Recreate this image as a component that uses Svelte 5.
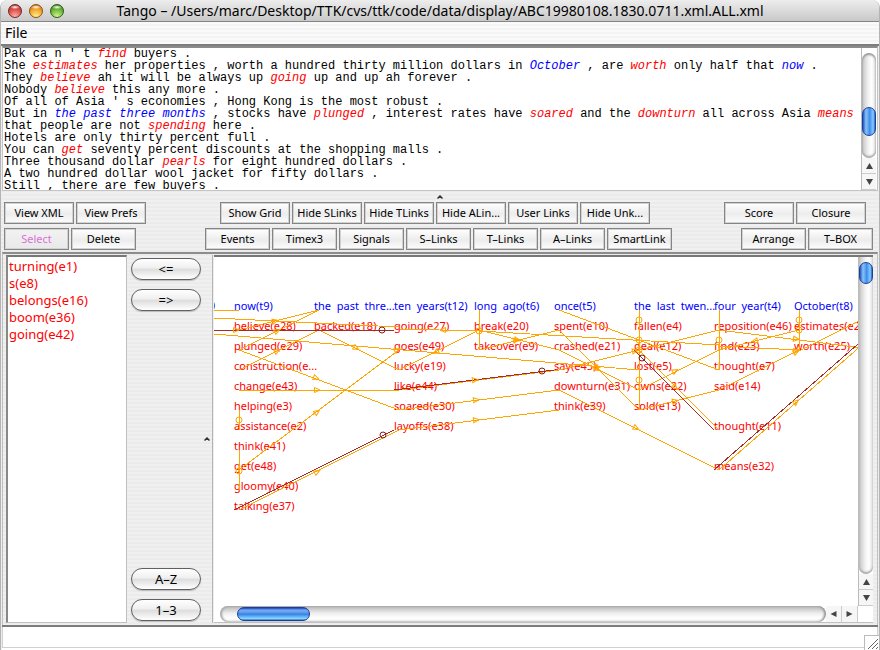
<script>
  const path = 'Tango – /Users/marc/Desktop/TTK/cvs/ttk/code/data/display/ABC19980108.1830.0711.xml.ALL.xml';

  // *word* marks an event, _word_ marks a time expression
  const source = [
    "Pak ca n ' t *find* buyers .",
    'She *estimates* her properties , worth a hundred thirty million dollars in _October_ , are *worth* only half that _now_ .',
    'They *believe* ah it will be always up *going* up and up ah forever .',
    'Nobody *believe* this any more .',
    "Of all of Asia ' s economies , Hong Kong is the most robust .",
    'But in _the past three months_ , stocks have *plunged* , interest rates have *soared* and the *downturn* all across Asia *means*',
    'that people are not *spending* here .',
    'Hotels are only thirty percent full .',
    'You can *get* seventy percent discounts at the shopping malls .',
    'Three thousand dollar *pearls* for eight hundred dollars .',
    'A two hundred dollar wool jacket for fifty dollars .',
    'Still , there are few buyers .'
  ];
  const lines = source.map((line) =>
    line.split(/(\*[^*]+\*|_[^_]+_)/).filter(Boolean).map((t) =>
      t[0] === '*' ? { kind: 'event', text: t.slice(1, -1) }
      : t[0] === '_' ? { kind: 'time', text: t.slice(1, -1) }
      : { kind: '', text: t }));

  const rows = [
    { wide: true, groups: [
      ['View XML', 'View Prefs'],
      ['Show Grid', 'Hide SLinks', 'Hide TLinks', 'Hide ALin...', 'User Links', 'Hide Unk...'],
      ['Score', 'Closure']] },
    { wide: false, groups: [
      ['Select', 'Delete'],
      ['Events', 'Timex3', 'Signals', 'S–Links', 'T–Links', 'A–Links', 'SmartLink'],
      ['Arrange', 'T–BOX']] }
  ];

  const events = ['turning(e1)', 's(e8)', 'belongs(e16)', 'boom(e36)', 'going(e42)'];

  // each column: time label first, then events on rows 1, 2, 3 ...
  const columns = [
    ['now(t9)', 'believe(e28)', 'plunged(e29)', 'construction(e...', 'change(e43)', 'helping(e3)', 'assistance(e2)', 'think(e41)', 'get(e48)', 'gloomy(e40)', 'talking(e37)'],
    ['the  past  thre...', 'backed(e18)'],
    ['ten  years(t12)', 'going(e27)', 'goes(e49)', 'lucky(e19)', 'like(e44)', 'soared(e30)', 'layoffs(e38)'],
    ['long  ago(t6)', 'break(e20)', 'takeover(e9)'],
    ['once(t5)', 'spent(e10)', 'crashed(e21)', 'say(e45)', 'downturn(e31)', 'think(e39)'],
    ['the  last  twen...', 'fallen(e4)', 'deal(e12)', 'lost(e5)', 'owns(e22)', 'sold(e13)'],
    ['four  year(t4)', 'reposition(e46)', 'find(e23)', 'thought(e7)', 'said(e14)', '', 'thought(e11)', '', 'means(e32)'],
    ['October(t8)', 'estimates(e24)', 'worth(e25)']
  ];
  const nodes = columns.flatMap((col, c) =>
    col.map((text, r) => ({ text, time: r === 0, x: 20 + 80 * c, y: 53 + 20 * r })).filter((n) => n.text));

  // x1, y1, x2, y2 on the canvas
  const links = [
    [0, 53, 25, 53], [0, 61, 185, 70], [0, 77, 425, 113],
    [25, 73, 105, 53], [25, 93, 105, 53], [25, 113, 105, 73], [25, 93, 185, 153],
    [105, 73, 185, 113], [25, 133, 185, 133], [25, 213, 185, 93], [25, 253, 185, 173],
    [25, 153, 25, 173], [25, 193, 25, 233],
    [185, 72, 265, 74], [185, 113, 265, 73], [185, 133, 345, 113], [185, 153, 345, 133], [185, 173, 345, 153],
    [265, 53, 265, 93], [265, 93, 345, 73], [265, 73, 345, 93], [265, 74, 505, 88],
    [345, 53, 505, 113], [345, 93, 425, 133], [345, 73, 425, 153], [345, 113, 425, 93], [345, 133, 505, 213],
    [425, 53, 425, 153], [425, 93, 505, 73], [425, 133, 505, 93], [425, 153, 505, 133], [425, 93, 505, 173],
    [505, 53, 505, 113], [505, 73, 665, 93], [505, 93, 585, 73], [505, 89, 585, 93],
    [585, 53, 585, 93], [505, 133, 585, 93], [585, 94, 665, 54], [505, 213, 665, 73]
  ];
  const darkLinks = [
    [0, 73, 180, 73, 168, 73], [20, 253, 180, 173, 169, 178], [180, 133, 340, 113, 328, 114],
    [420, 93, 500, 173, 428, 101], [500, 213, 660, 73, 0, 0]
  ];
  // x, y, rotation in degrees
  const arrows = [
    [22, 73, 0], [61, 64, -14], [63, 74, -27], [63, 94, -27], [102, 121, 21], [142, 91, 27], [103, 133, 0],
    [103, 155, -37], [103, 215, -27], [229, 73, 180], [222, 95, 153], [183, 93, -30], [261, 123, -7], [262, 143, -7], [262, 163, -7],
    [302, 83, -14], [303, 83, 14], [383, 110, 5], [383, 112, 27], [383, 111, 45], [422, 171, 27],
    [421, 94, -10], [461, 114, -27], [461, 144, -14], [461, 130, 45], [541, 84, 166], [582, 82, 7], [582, 94, 0], [582, 95, -27], [582, 145, -41]
  ];
  const circles = [
    [25, 163], [25, 214], [265, 74], [425, 63], [425, 83], [425, 93], [425, 123],
    [505, 83], [585, 63], [585, 73]
  ];

  let selected = $state('Select');
</script>

{#snippet arrow(dir)}
  <svg width="7" height="6" viewBox="0 0 7 6" aria-hidden="true">
    <path fill="#444" d={{ up: 'M0 6L3.5 0L7 6Z', down: 'M0 0L3.5 6L7 0Z', left: 'M6.5 0L0.5 3L6.5 6Z', right: 'M0.5 0L6.5 3L0.5 6Z' }[dir]} />
  </svg>
{/snippet}

{#snippet caret()}
  <svg width="6" height="4" viewBox="0 0 6 4" aria-hidden="true"><path d="M0.5 3.5L3 1L5.5 3.5" fill="none" stroke="#333" stroke-width="1.5" /></svg>
{/snippet}

<div class="window">
  <header class="title">
    <div class="lights">
      <button class="light red" aria-label="Close"></button>
      <button class="light amber" aria-label="Minimise"></button>
      <button class="light green" aria-label="Zoom"></button>
    </div>
    <h1>{path}</h1>
  </header>

  <nav class="menu"><button>File</button></nav>

  <section class="document">
    <div class="prose">
      {#each lines as line}
        <p>{#each line as t}<span class={t.kind}>{t.text}</span>{/each}</p>
      {/each}
    </div>
    <div class="bar vertical">
      <div class="cap"></div>
      <div class="track"><div class="thumb middle"></div></div>
      <button aria-label="Scroll text up">{@render arrow('up')}</button>
      <button aria-label="Scroll text down">{@render arrow('down')}</button>
    </div>
  </section>

  <div class="split-h">{@render caret()}</div>

  <section class="tools">
    {#each rows as row}
      <div class="row" class:wide={row.wide}>
        {#each row.groups as group}
          <div class="group">
            {#each group as label}
              <button class:active={selected === label} onclick={() => (selected = label)}>{label}</button>
            {/each}
          </div>
        {/each}
      </div>
    {/each}
  </section>

  <main class="work">
    <ul class="events">
      {#each events as e}<li>{e}</li>{/each}
    </ul>
    <div class="mover">
      <button>&lt;=</button>
      <button>=&gt;</button>
      <span class="spring"></span>
      <button>A–Z</button>
      <button>1–3</button>
    </div>
    <div class="split-v">{@render caret()}</div>
    <div class="graph">
      <div class="canvas">
        <svg width="100%" height="100%" aria-label="Temporal links">
          <g class="labels">
            <text class="time" x="1" y="52" text-anchor="end">)</text>
            {#each nodes as n}
              <text class:time={n.time} x={n.x} y={n.y}>{n.text}</text>
            {/each}
          </g>
          <g class="links">
            {#each links as [x1, y1, x2, y2]}<line {x1} {y1} {x2} {y2} />{/each}
          </g>
          <g class="links dark">
            {#each darkLinks as [x1, y1, x2, y2]}<line {x1} {y1} {x2} {y2} />{/each}
          </g>
          <g class="marks">
            {#each arrows as [x, y, a]}<path d="M-2.5 -2.5L3 0L-2.5 2.5Z" transform="translate({x} {y}) rotate({a})" />{/each}
            {#each circles as [cx, cy]}<circle {cx} {cy} r="3" />{/each}
          </g>
          <g class="marks dark">
            {#each darkLinks.filter((l) => l[4]) as l}<circle cx={l[4]} cy={l[5]} r="3" />{/each}
          </g>
        </svg>
      </div>
      <div class="bar vertical">
        <div class="track square"><div class="thumb top"></div></div>
        <button aria-label="Scroll graph up">{@render arrow('up')}</button>
        <button aria-label="Scroll graph down">{@render arrow('down')}</button>
      </div>
      <div class="bar horizontal">
        <div class="cap"></div>
        <div class="track"><div class="thumb"></div></div>
        <button aria-label="Scroll graph left">{@render arrow('left')}</button>
        <button aria-label="Scroll graph right">{@render arrow('right')}</button>
      </div>
    </div>
  </main>

  <footer class="status">
    <input aria-label="Status" readonly />
    <svg class="grip" width="15" height="15" viewBox="0 0 15 15" aria-hidden="true">
      <rect x="0.5" y="0.5" width="16" height="16" fill="#fff" stroke="#bbb" />
      <path d="M4 14L14 4M8 14L14 8M12 14L14 12" stroke="#666" fill="none" />
    </svg>
  </footer>
</div>

<style>
  :global(body) { background: #fff; }
  .window, .window * { box-sizing: border-box; }
  .window {
    display: flex;
    flex-direction: column;
    height: 100vh;
    overflow: hidden;
    border-radius: 8px 8px 0 0;
    border: 1px solid #b4b4b4;
    border-width: 0 1px;
    font-family: "Noto Sans", "Open Sans", sans-serif;
    color: #000;
    background: repeating-linear-gradient(#f0f0f0 0 2px, #ebebeb 2px 4px);
  }
  button { font: inherit; padding: 0; margin: 0; border: 0; background: none; color: inherit; }
  p, ul, h1 { margin: 0; padding: 0; }

  .title {
    display: flex;
    align-items: center;
    flex: none;
    height: 22px;
    padding: 0 63px 0 7px;
    background: linear-gradient(#ededed, #c8c8c8);
    border-bottom: 1px solid #858585;
  }
  .lights { display: flex; gap: 7px; width: 56px; }
  .light { width: 14px; height: 14px; border-radius: 50%; border: 1px solid #555; }
  .red { border-color: #6e2623; background: radial-gradient(ellipse 5px 2px at 50% 18%, #fff, transparent), radial-gradient(circle at 50% 95%, #ffb0a8, #dd504a 55%, #a02a28); }
  .amber { border-color: #8a5014; background: radial-gradient(ellipse 5px 2px at 50% 18%, #fff, transparent), radial-gradient(circle at 50% 95%, #fff48a, #f5a52e 55%, #b86a14); }
  .green { border-color: #2c5a14; background: radial-gradient(ellipse 5px 2px at 50% 18%, #fff, transparent), radial-gradient(circle at 50% 95%, #d4f888, #6cb83a 55%, #3a7a1c); }
  h1 { flex: 1; text-align: center; font-size: 14px; font-weight: 400; line-height: 20px; white-space: nowrap; }

  .menu {
    flex: none;
    height: 24px;
    padding: 0 4px;
    font-size: 14px;
    line-height: 22px;
    background: repeating-linear-gradient(#fafafa 0 2px, #f4f4f4 2px 4px);
    border-bottom: 2px solid #7e7e7e;
  }

  .document {
    display: flex;
    flex: none;
    height: 145px;
    margin: 0 1px;
    background: #fff;
    border: 1px solid #c4c4c4;
    border-top: 2px solid #8c8c8c;
    padding-right: 1px;
  }
  .prose {
    flex: 1;
    min-width: 0;
    overflow: hidden;
    padding-left: 1px;
    font-family: "Liberation Mono", "Courier New", monospace;
    font-size: 12px;
    line-height: 12px;
    white-space: pre;
  }
  .event { color: #f00; font-style: italic; }
  .prose .time { color: #00f; font-style: italic; }

  .split-h { flex: none; height: 11px; display: flex; justify-content: center; align-items: center; }

  .tools { flex: none; display: flex; flex-direction: column; gap: 4px; padding: 0 6px 2px 3px; }
  .row { display: flex; justify-content: space-between; --w: 65px; }
  .row.wide { --w: 70px; padding-right: 7px; }
  .group { display: flex; gap: 2px; }
  .group button {
    width: var(--w);
    height: 22px;
    border: 1px solid #858585;
    box-shadow: inset 1px 1px 0 #d2d2d2, inset -1px -1px 0 #d2d2d2;
    background: linear-gradient(#fff, #ececec 55%, #fdfdfd);
    font-size: 11px;
    line-height: 20px;
    white-space: nowrap;
  }
  .group .active { color: #da70d6; background: linear-gradient(#f2f2f2, #e9e9e9); }

  .work {
    flex: 1;
    min-height: 0;
    display: flex;
    margin: 0 1px;
    border: 1px solid #c0c0c0;
    border-top: 2px solid #8c8c8c;
    border-bottom: 0;
    padding: 1px 4px 2px 3px;
  }
  .events {
    width: 121px;
    list-style: none;
    background: #fff;
    border: 1px solid #c0c0c0;
    border-top: 2px solid #777;
    border-left: 2px solid #888;
    color: #f00;
    font-size: 13px;
    line-height: 17px;
    padding: 1px;
  }
  .mover { width: 74px; padding: 3px 0 2px 4px; display: flex; flex-direction: column; gap: 9px; }
  .mover button {
    width: 70px;
    height: 22px;
    border: 1px solid #606060;
    border-radius: 11px;
    background: linear-gradient(#fff, #efefef 46%, #dcdcdc 50%, #fff);
    box-shadow: 0 1px 1px #bbb;
    font-size: 13px;
    line-height: 18px;
  }
  .spring { flex: 1; }
  .split-v { width: 12px; display: flex; align-items: center; justify-content: center; border-right: 1px solid #b4b4b4; }
  .graph {
    flex: 1;
    min-width: 0;
    display: grid;
    grid-template: minmax(0, 1fr) 16px / minmax(0, 1fr) 15px;
    background: #fff;
    border-top: 2px solid #777;
    border-bottom: 1px solid #c0c0c0;
    margin-left: 1px;
  }
  .canvas { overflow: hidden; min-height: 0; }
  .canvas svg { display: block; }
  .labels { font-size: 11px; fill: #f00; }
  .labels text { white-space: pre; }
  .labels .time { fill: #00f; }
  .links { stroke: #ffa500; shape-rendering: crispEdges; }
  .links.dark { stroke: #a52a2a; }
  .marks { fill: none; stroke: #ffa500; }
  .marks.dark { stroke: #8b1a1a; }

  .bar { display: flex; background: #fff; }
  .bar button { display: flex; align-items: center; justify-content: center; flex: none; background: #f6f6f6; }
  .track { flex: 1; display: flex; }
  .vertical { width: 15px; flex-direction: column; border-left: 1px solid #bbb; }
  .vertical .cap { height: 5px; }
  .vertical .track {
    flex-direction: column;
    border-radius: 7px;
    box-shadow: inset 0 2px 2px #999, inset 0 -2px 2px #aaa;
    background: linear-gradient(90deg, #c4c4c4, #f2f2f2 45%, #fff 70%, #e0e0e0);
  }
  .vertical .square { border-radius: 0 0 7px 7px; box-shadow: inset 0 -2px 2px #aaa; }
  .vertical button { height: 16px; border-bottom: 1px solid #ccc; }
  .thumb { border: 1px solid #1c3f9c; border-radius: 7px; flex: none; }
  .vertical .thumb {
    height: 29px;
    background: linear-gradient(90deg, #1b58c8, #8cc0f4 25%, #5ea2ee 45%, #3d8ceb 55%, #86ccff 85%, #2a62c0);
  }
  .thumb.middle { margin-top: 54px; }
  .vertical .thumb.top { margin-top: 5px; height: 22px; }
  .horizontal .cap { width: 6px; }
  .horizontal .track {
    border-radius: 8px;
    box-shadow: inset 2px 0 2px #aaa, inset -2px 0 2px #999;
    background: linear-gradient(#b4b4b4, #eee 45%, #fff 75%, #f0f0f0);
  }
  .horizontal .thumb {
    width: 73px;
    height: 14px;
    margin: 1px 0 0 17px;
    background: linear-gradient(#1747b8, #7aaaf0 18%, #5a96ee 42%, #2f7fe6 50%, #8ad8ff 88%, #3a78c8);
  }
  .horizontal button { width: 16px; border-right: 1px solid #ccc; }

  .status {
    flex: none;
    position: relative;
    height: 25px;
    border-top: 2px solid #7c7c7c;
    margin: 0 1px;
    background: #fff;
  }
  .status input {
    display: block;
    width: 100%;
    height: 21px;
    border: 1px solid #d0d0d0;
    border-top: 0;
    background: #fff;
    outline: 0;
  }
  .grip { position: absolute; right: -1px; bottom: 0; }
</style>
